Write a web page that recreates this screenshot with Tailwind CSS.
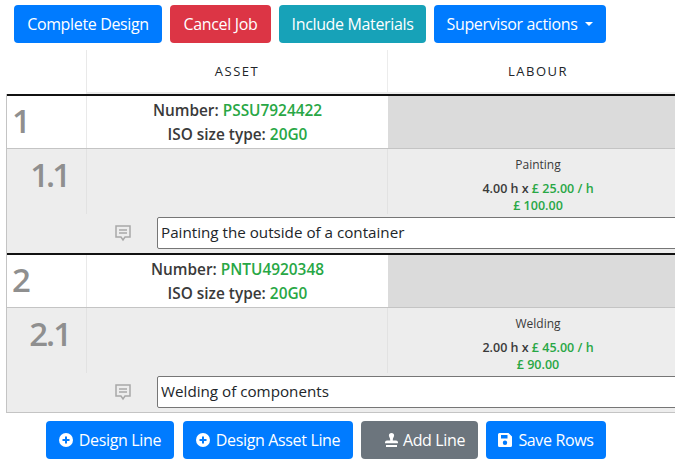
<!DOCTYPE html>
<html lang="en">
<head>
    <meta charset="UTF-8">
    <title>Job design</title>
    <script src="https://cdn.jsdelivr.net/npm/@tailwindcss/browser@4"></script>
</head>
<body class="bg-white w-[675px] h-[466px] overflow-hidden font-['Open_Sans',sans-serif] text-[#212529]">
    <!-- top actions -->
    <div class="flex gap-2 pl-[14px] pt-[5px] h-[50px] text-base tracking-[-0.35px] text-white">
        <button class="w-[148px] h-[38px] rounded bg-[#007bff]">Complete Design</button>
        <button class="w-[101px] h-[38px] rounded bg-[#dc3545]">Cancel Job</button>
        <button class="w-[147px] h-[38px] rounded bg-[#17a2b8]">Include Materials</button>
        <button class="w-[172px] h-[38px] rounded bg-[#007bff] flex items-center justify-center gap-2">
            Supervisor actions
            <span class="w-0 h-0 border-x-[4.5px] border-x-transparent border-t-[4.5px] border-t-white"></span>
        </button>
    </div>

    <div class="w-[688px]">
        <!-- header -->
        <div class="grid grid-cols-[87px_301px_1fr] h-[44px] text-[13px] font-medium tracking-[1.5px] text-center text-[#212529]">
            <div class="border-r border-[#e9e9e9]"></div>
            <div class="border-r border-b-2 border-[#ececec] flex items-center justify-center pt-[2px]">ASSET</div>
            <div class="border-b-2 border-[#ececec] flex items-center justify-center pt-[2px]">LABOUR</div>
        </div>

        <div class="ml-[6px] border-l border-[#c4c4c4]">
            <!-- job 1 -->
            <div class="border-t-2 border-[#111] grid grid-cols-[80px_301px_1fr] h-[55px] border-b border-b-[#c4c4c4]">
                <div class="border-r border-[#e9e9e9] text-[33px] font-semibold text-[#8f8f8f] leading-[50px] pl-[5px]">1</div>
                <div class="text-center text-[15.4px] font-semibold leading-[24px] pt-[3px] text-[#3a3a3a]">
                    <div>Number: <span class="text-[#28a745]">PSSU7924422</span></div>
                    <div>ISO size type: <span class="text-[#28a745]">20G0</span></div>
                </div>
                <div class="bg-[#dbdbdb]"></div>
            </div>
            <div class="bg-[#ededed] h-[104px]">
                <div class="grid grid-cols-[80px_301px_1fr] h-[63px]">
                    <div class="border-r border-[#e2e2e2] text-[33px] font-semibold tracking-[-3px] text-[#8f8f8f] text-right pr-[18px] leading-[52px]">1.1</div>
                    <div class="border-r border-[#e2e2e2]"></div>
                    <div class="text-center text-[#3a3a3a]">
                        <div class="text-xs leading-4 pt-[8px]">Painting</div>
                        <div class="text-[12.5px] font-semibold leading-[17px] mt-[7px]">4.00 h x <span class="text-[#28a745]">£ 25.00 / h</span></div>
                        <div class="text-[12.5px] font-semibold leading-[17px] text-[#28a745]">£ 100.00</div>
                    </div>
                </div>
                <div class="flex items-center h-[41px] pl-[107px]">
                    <svg class="w-[18px] h-[18px] mr-[25px] shrink-0" viewBox="0 0 18 18" fill="none" stroke="#a8a8a8" stroke-width="1.5"><path d="M2 2h14v11h-5l-2 3-2-3H2z"/><path d="M5 6h8M5 9h8"/></svg>
                    <input class="flex-1 h-[32px] bg-white border border-[#767676] rounded-l-[2px] px-[3px] pb-[2px] text-[15.2px] text-[#212529]" value="Painting the outside of a container">
                </div>
            </div>

            <!-- job 2 -->
            <div class="border-t-2 border-[#111] grid grid-cols-[80px_301px_1fr] h-[55px] border-b border-b-[#c4c4c4]">
                <div class="border-r border-[#e9e9e9] text-[33px] font-semibold text-[#8f8f8f] leading-[50px] pl-[5px]">2</div>
                <div class="text-center text-[15.4px] font-semibold leading-[24px] pt-[3px] text-[#3a3a3a]">
                    <div>Number: <span class="text-[#28a745]">PNTU4920348</span></div>
                    <div>ISO size type: <span class="text-[#28a745]">20G0</span></div>
                </div>
                <div class="bg-[#dbdbdb]"></div>
            </div>
            <div class="bg-[#ededed] h-[105px] border-b border-[#c4c4c4]">
                <div class="grid grid-cols-[80px_301px_1fr] h-[64px]">
                    <div class="border-r border-[#e2e2e2] text-[33px] font-semibold tracking-[-2px] text-[#8f8f8f] text-right pr-[16px] leading-[52px]">2.1</div>
                    <div class="border-r border-[#e2e2e2]"></div>
                    <div class="text-center text-[#3a3a3a]">
                        <div class="text-xs leading-4 pt-[8px]">Welding</div>
                        <div class="text-[12.5px] font-semibold leading-[17px] mt-[7px]">2.00 h x <span class="text-[#28a745]">£ 45.00 / h</span></div>
                        <div class="text-[12.5px] font-semibold leading-[17px] text-[#28a745]">£ 90.00</div>
                    </div>
                </div>
                <div class="flex items-center h-[40px] pl-[107px]">
                    <svg class="w-[18px] h-[18px] mr-[25px] shrink-0" viewBox="0 0 18 18" fill="none" stroke="#a8a8a8" stroke-width="1.5"><path d="M2 2h14v11h-5l-2 3-2-3H2z"/><path d="M5 6h8M5 9h8"/></svg>
                    <input class="flex-1 h-[32px] bg-white border border-[#767676] rounded-l-[2px] px-[3px] pb-[2px] text-[15.2px] text-[#212529]" value="Welding of components">
                </div>
            </div>
        </div>
    </div>

    <!-- bottom actions -->
    <div class="flex pl-[46px] pt-[8px] gap-2 text-base tracking-[-0.35px] text-white">
        <button class="w-[128px] h-[38px] rounded bg-[#007bff] flex items-center justify-center gap-[6px]">
            <svg class="w-[14px] h-[14px]" viewBox="0 0 14 14"><circle cx="7" cy="7" r="7" fill="#fff"/><path d="M7 3.500v7M3.500 7h7" stroke="#007bff" stroke-width="2"/></svg>
            Design Line
        </button>
        <button class="w-[170px] h-[38px] ml-px rounded bg-[#007bff] flex items-center justify-center gap-[6px]">
            <svg class="w-[14px] h-[14px]" viewBox="0 0 14 14"><circle cx="7" cy="7" r="7" fill="#fff"/><path d="M7 3.500v7M3.500 7h7" stroke="#007bff" stroke-width="2"/></svg>
            Design Asset Line
        </button>
        <button class="w-[117px] h-[38px] rounded bg-[#6c757d] flex items-center justify-center gap-[5px] pl-[11px]">
            <svg class="w-[13px] h-[14px]" viewBox="0 0 13 14" fill="#fff"><path d="M6.500 0a2.600 2.600 0 0 0-2.600 2.600c0 1.500 1.300 2.400 1.300 4.400v.5H2a2 2 0 0 0-2 2v.8h13v-.8a2 2 0 0 0-2-2H7.800V7c0-2 1.300-2.900 1.300-4.400A2.600 2.600 0 0 0 6.500 0z"/><rect x="1" y="12" width="11" height="2"/></svg>
            Add Line
        </button>
        <button class="w-[120px] h-[38px] rounded bg-[#007bff] flex items-center justify-center gap-[6px]">
            <svg class="w-[14px] h-[14px]" viewBox="0 0 14 14"><path fill="#fff" fill-rule="evenodd" d="M1.500 0H10.500L14 3.500V12.500A1.500 1.500 0 0 1 12.500 14H1.500A1.500 1.500 0 0 1 0 12.500V1.500A1.500 1.500 0 0 1 1.500 0ZM3 2V5.500H9.500V2ZM7 7.500A2.200 2.200 0 1 0 7 11.900 2.200 2.200 0 1 0 7 7.500Z"/></svg>
            Save Rows
        </button>
    </div>
</body>
</html>
